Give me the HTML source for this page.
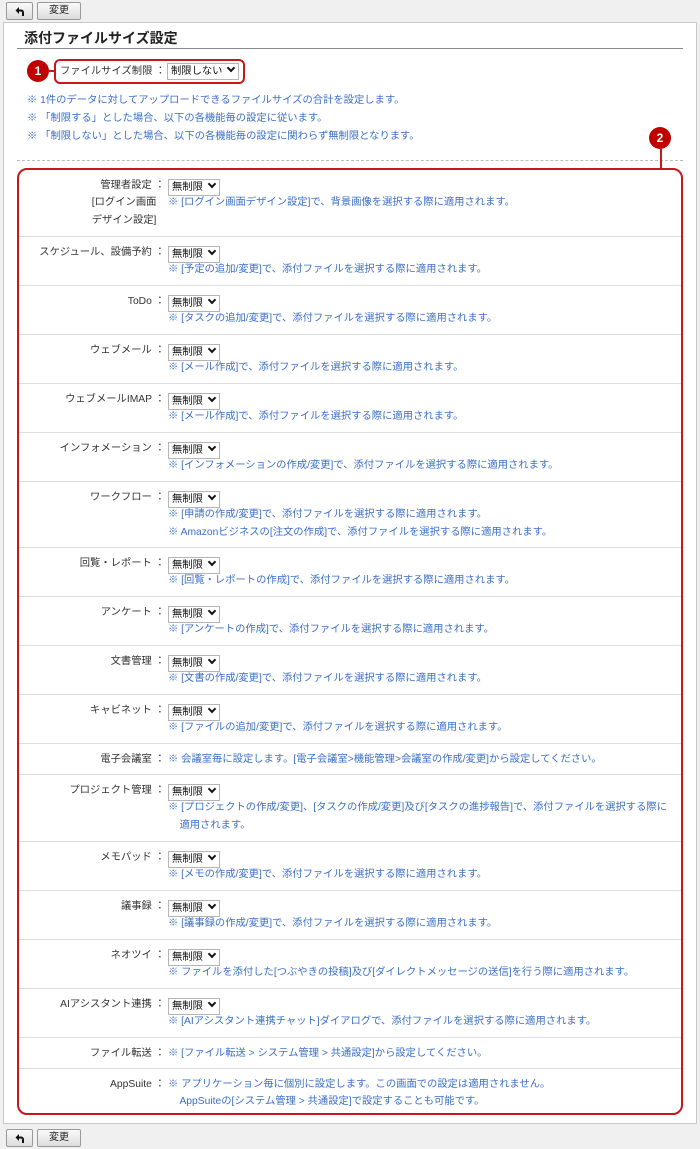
<!DOCTYPE html>
<html><head><meta charset="utf-8"><style>
*{margin:0;padding:0;box-sizing:border-box}
body{width:700px;height:1147px;background:#f0f0f0;font-family:"Liberation Sans","Noto Sans CJK JP",sans-serif;font-size:10.3px;color:#333;position:relative;overflow:hidden}
.btn{position:absolute;height:18px;border:1px solid #999;background:linear-gradient(#fafafa,#dcdcdc);border-radius:2px;font-size:10px;text-align:center;line-height:16px;color:#222}
.btn svg{margin-top:3px}
.panel{position:absolute;left:3px;top:22px;width:694px;height:1102px;background:#fff;border:1px solid #c8c8c8}
.abs{position:absolute}
.title{left:24px;top:28px;font-size:14px;font-weight:bold;color:#222}
.hr{left:17px;top:48px;width:666px;border-top:1px solid #888}
.blue{color:#3b6fc9}
.sel{display:inline-block;height:17px;border:1px solid #b5b5b5;background:#fff;line-height:15px;padding:0 3px;font-size:10.3px;color:#111;vertical-align:middle}
.sel:after{content:"";display:inline-block;width:4px;height:4px;border-right:2px solid #111;border-bottom:2px solid #111;transform:rotate(45deg);margin:0 1px 3px 6px}
.circ{position:absolute;width:22px;height:22px;border-radius:50%;background:#c00000;color:#fff;font-size:12px;font-weight:bold;text-align:center;line-height:22px}
.box{position:absolute;left:17px;top:168px;width:666px;height:947px;border:2px solid #c8171d;border-radius:10px;overflow:hidden}
.row{position:relative;border-bottom:1px solid #ddd}
.row:last-child{border-bottom:none}
.lab{position:absolute;left:0;width:146px;top:9px;text-align:right;line-height:18px}
.lab .l1{height:14px;line-height:14px;margin-bottom:1px}
.cnt{position:absolute;left:149px;top:9px;right:4px}
.cnt .l1{height:14px;line-height:14px;margin-bottom:1px}
.cnt .n{line-height:18px;color:#3b6fc9;white-space:nowrap}
</style></head><body>
<div class="btn" style="left:6px;top:2px;width:27px"><svg width="10" height="10" viewBox="0 0 10 10"><path d="M4 1 L0.5 4.5 L4 8 Z" fill="#111"/><path d="M3 4.5 H6 Q8 4.5 8 7 V10" stroke="#111" stroke-width="2" fill="none"/></svg></div>
<div class="btn" style="left:37px;top:2px;width:44px">変更</div>
<div class="panel"></div>
<div class="abs title">添付ファイルサイズ設定</div>
<div class="abs hr"></div>
<div class="circ" style="left:27px;top:60px">1</div>
<div class="abs" style="left:48px;top:70px;width:7px;border-top:2px solid #c8171d"></div>
<div class="abs" style="left:54px;top:59px;width:191px;height:25px;border:2px solid #c8171d;border-radius:6px"></div>
<div class="abs" style="left:60px;top:63px;line-height:17px">ファイルサイズ制限 ：</div>
<div class="abs" style="left:167px;top:63px"><span class="sel">制限しない</span></div>
<div class="abs blue" style="left:27px;top:92px;line-height:18px">※ 1件のデータに対してアップロードできるファイルサイズの合計を設定します。<br>※ 「制限する」とした場合、以下の各機能毎の設定に従います。<br>※ 「制限しない」とした場合、以下の各機能毎の設定に関わらず無制限となります。</div>
<div class="abs" style="left:17px;top:160px;width:666px;border-top:1px dashed #bbb"></div>
<div class="circ" style="left:649px;top:127px">2</div>
<div class="abs" style="left:660px;top:148px;height:21px;border-left:2px solid #c8171d"></div>
<div class="box">
<div class="row" style="height:67px"><div class="lab"><div class="l1">管理者設定 ：</div>[ログイン画面&nbsp;&nbsp;&nbsp;<br>デザイン設定]&nbsp;&nbsp;&nbsp;</div><div class="cnt"><div class="l1"><span class="sel">無制限</span></div><div class="n">※ [ログイン画面デザイン設定]で、背景画像を選択する際に適用されます。</div></div></div>
<div class="row" style="height:49px"><div class="lab"><div class="l1">スケジュール、設備予約 ：</div></div><div class="cnt"><div class="l1"><span class="sel">無制限</span></div><div class="n">※ [予定の追加/変更]で、添付ファイルを選択する際に適用されます。</div></div></div>
<div class="row" style="height:49px"><div class="lab"><div class="l1">ToDo ：</div></div><div class="cnt"><div class="l1"><span class="sel">無制限</span></div><div class="n">※ [タスクの追加/変更]で、添付ファイルを選択する際に適用されます。</div></div></div>
<div class="row" style="height:49px"><div class="lab"><div class="l1">ウェブメール ：</div></div><div class="cnt"><div class="l1"><span class="sel">無制限</span></div><div class="n">※ [メール作成]で、添付ファイルを選択する際に適用されます。</div></div></div>
<div class="row" style="height:49px"><div class="lab"><div class="l1">ウェブメールIMAP ：</div></div><div class="cnt"><div class="l1"><span class="sel">無制限</span></div><div class="n">※ [メール作成]で、添付ファイルを選択する際に適用されます。</div></div></div>
<div class="row" style="height:49px"><div class="lab"><div class="l1">インフォメーション ：</div></div><div class="cnt"><div class="l1"><span class="sel">無制限</span></div><div class="n">※ [インフォメーションの作成/変更]で、添付ファイルを選択する際に適用されます。</div></div></div>
<div class="row" style="height:66px"><div class="lab"><div class="l1">ワークフロー ：</div></div><div class="cnt"><div class="l1"><span class="sel">無制限</span></div><div class="n">※ [申請の作成/変更]で、添付ファイルを選択する際に適用されます。</div><div class="n">※ Amazonビジネスの[注文の作成]で、添付ファイルを選択する際に適用されます。</div></div></div>
<div class="row" style="height:49px"><div class="lab"><div class="l1">回覧・レポート ：</div></div><div class="cnt"><div class="l1"><span class="sel">無制限</span></div><div class="n">※ [回覧・レポートの作成]で、添付ファイルを選択する際に適用されます。</div></div></div>
<div class="row" style="height:49px"><div class="lab"><div class="l1">アンケート ：</div></div><div class="cnt"><div class="l1"><span class="sel">無制限</span></div><div class="n">※ [アンケートの作成]で、添付ファイルを選択する際に適用されます。</div></div></div>
<div class="row" style="height:49px"><div class="lab"><div class="l1">文書管理 ：</div></div><div class="cnt"><div class="l1"><span class="sel">無制限</span></div><div class="n">※ [文書の作成/変更]で、添付ファイルを選択する際に適用されます。</div></div></div>
<div class="row" style="height:49px"><div class="lab"><div class="l1">キャビネット ：</div></div><div class="cnt"><div class="l1"><span class="sel">無制限</span></div><div class="n">※ [ファイルの追加/変更]で、添付ファイルを選択する際に適用されます。</div></div></div>
<div class="row" style="height:31px"><div class="lab"><div class="l1">電子会議室 ：</div></div><div class="cnt"><div class="l1 n" style="line-height:14px">※ 会議室毎に設定します。[電子会議室&gt;機能管理&gt;会議室の作成/変更]から設定してください。</div></div></div>
<div class="row" style="height:67px"><div class="lab"><div class="l1">プロジェクト管理 ：</div></div><div class="cnt"><div class="l1"><span class="sel">無制限</span></div><div class="n">※ [プロジェクトの作成/変更]、[タスクの作成/変更]及び[タスクの進捗報告]で、添付ファイルを選択する際に<br>&nbsp;&nbsp;&nbsp;&nbsp;適用されます。</div></div></div>
<div class="row" style="height:49px"><div class="lab"><div class="l1">メモパッド ：</div></div><div class="cnt"><div class="l1"><span class="sel">無制限</span></div><div class="n">※ [メモの作成/変更]で、添付ファイルを選択する際に適用されます。</div></div></div>
<div class="row" style="height:49px"><div class="lab"><div class="l1">議事録 ：</div></div><div class="cnt"><div class="l1"><span class="sel">無制限</span></div><div class="n">※ [議事録の作成/変更]で、添付ファイルを選択する際に適用されます。</div></div></div>
<div class="row" style="height:49px"><div class="lab"><div class="l1">ネオツイ ：</div></div><div class="cnt"><div class="l1"><span class="sel">無制限</span></div><div class="n">※ ファイルを添付した[つぶやきの投稿]及び[ダイレクトメッセージの送信]を行う際に適用されます。</div></div></div>
<div class="row" style="height:49px"><div class="lab"><div class="l1">AIアシスタント連携 ：</div></div><div class="cnt"><div class="l1"><span class="sel">無制限</span></div><div class="n">※ [AIアシスタント連携チャット]ダイアログで、添付ファイルを選択する際に適用されます。</div></div></div>
<div class="row" style="height:31px"><div class="lab"><div class="l1">ファイル転送 ：</div></div><div class="cnt"><div class="l1 n" style="line-height:14px">※ [ファイル転送 &gt; システム管理 &gt; 共通設定]から設定してください。</div></div></div>
<div class="row" style="height:47px"><div class="lab"><div class="l1">AppSuite ：</div></div><div class="cnt"><div class="l1 n" style="line-height:14px">※ アプリケーション毎に個別に設定します。この画面での設定は適用されません。</div><div class="n">&nbsp;&nbsp;&nbsp;&nbsp;AppSuiteの[システム管理 &gt; 共通設定]で設定することも可能です。</div></div></div>
</div>
<div class="btn" style="left:6px;top:1129px;width:27px"><svg width="10" height="10" viewBox="0 0 10 10"><path d="M4 1 L0.5 4.5 L4 8 Z" fill="#111"/><path d="M3 4.5 H6 Q8 4.5 8 7 V10" stroke="#111" stroke-width="2" fill="none"/></svg></div>
<div class="btn" style="left:37px;top:1129px;width:44px">変更</div>
</body></html>
